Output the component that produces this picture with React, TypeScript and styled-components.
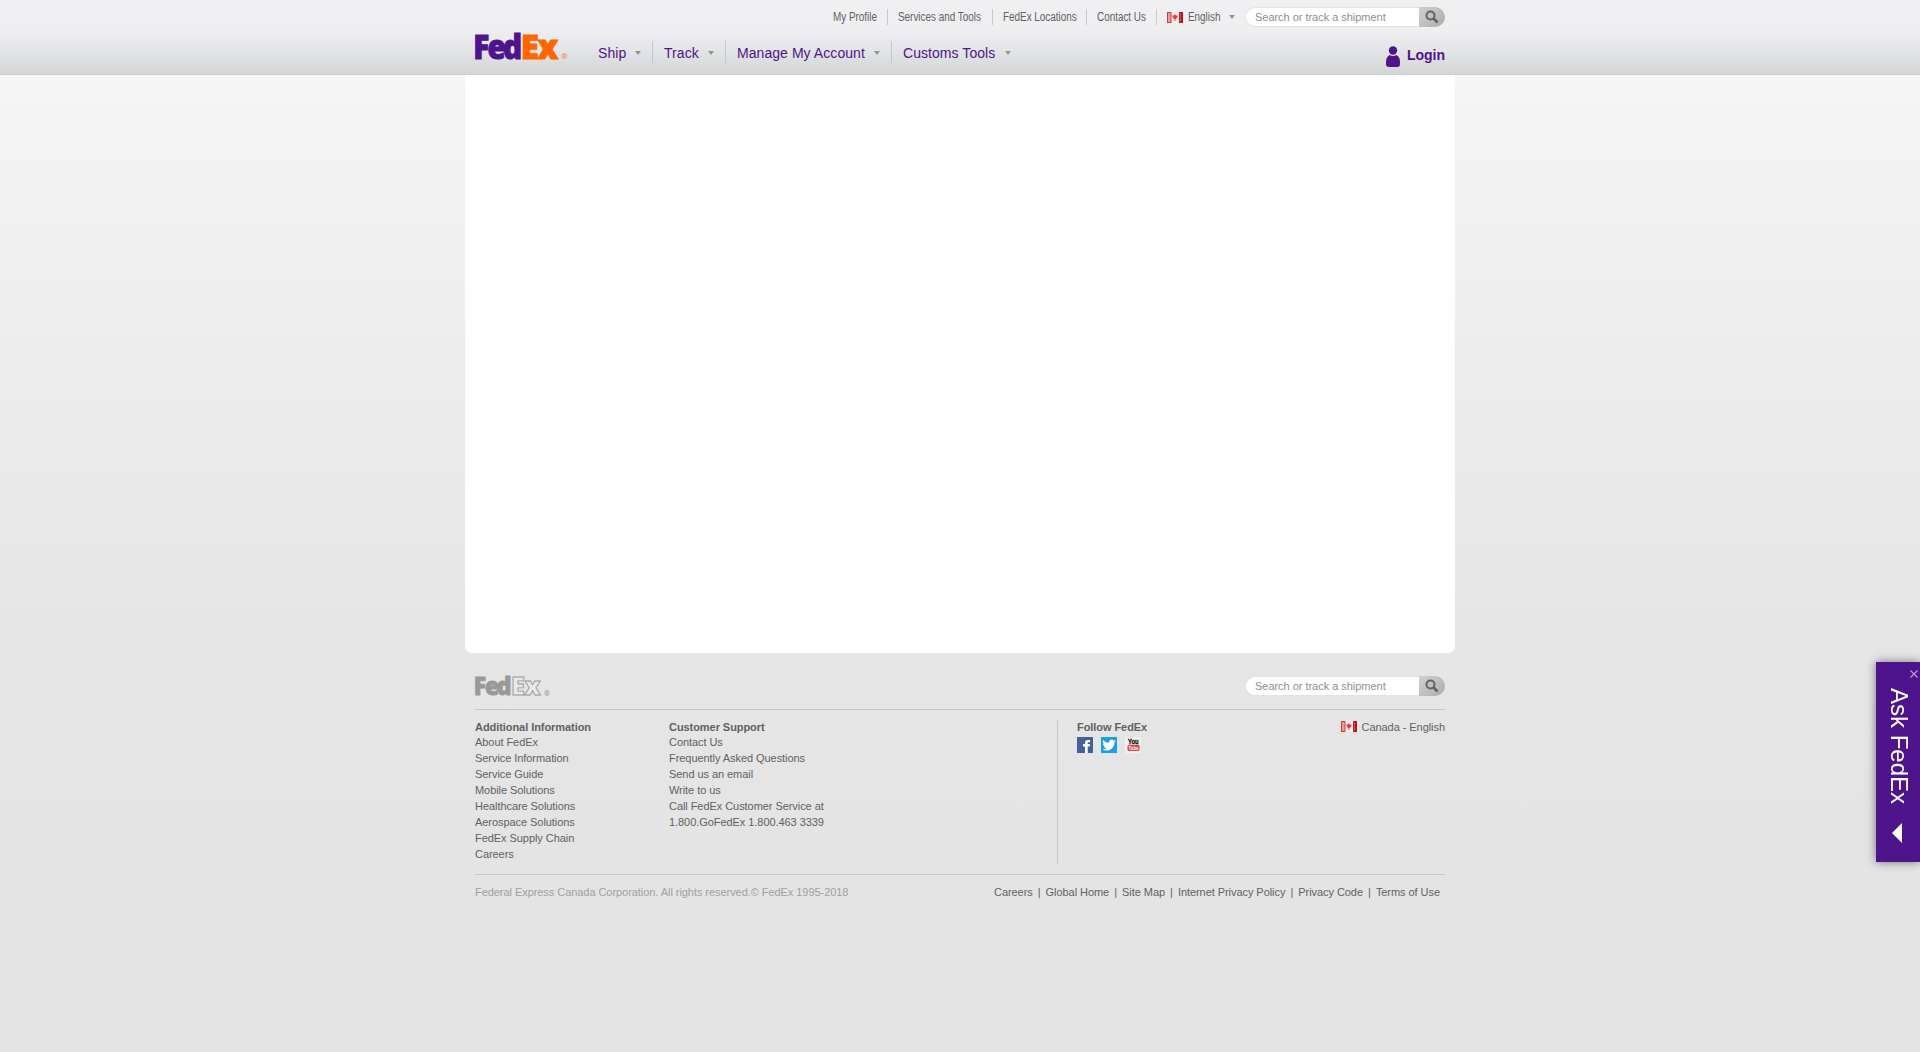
import React from 'react';
import styled, { createGlobalStyle } from 'styled-components';

const Global = createGlobalStyle`
  * { box-sizing: border-box; }
  html, body { margin: 0; padding: 0; }
  body {
    height: 1052px; overflow: hidden;
    background: linear-gradient(#f5f5f5 75px, #ececec 380px, #e6e6e6 620px, #e4e4e4 860px);
    font-family: "Liberation Sans", Arial, sans-serif; font-size: 11px; color: #616161;
  }
`;

const Header = styled.header`
  height: 75px;
  border-bottom: 1px solid #cfd0d1;
  background: linear-gradient(#f0f0f2 0, #efeff1 30px, #e5e6e7 48px, #d3d4d5 75px);
`;
const Container = styled.div`width: 970px; margin: 0 auto; display: flex; flex-direction: column;`;
const TopBar = styled.div`height: 34px; padding-top: 7px; display: flex; justify-content: flex-end;`;
const TopItem = styled.div<{ $w: number; $line?: string }>`
  width: ${p => p.$w}px; height: 16px; margin-top: 2px; padding-left: 10px;
  display: flex; align-items: center; gap: 5px; white-space: nowrap;
  border-left: 1px solid ${p => p.$line || '#c9c9cb'};
`;
const Narrow = styled.span<{ $w: number }>`
  width: ${p => p.$w}px; font-size: 12px; line-height: 16px;
  transform: scaleX(0.825); transform-origin: 0 50%; margin-right: ${p => -Math.round(p.$w * 0.175)}px;
`;
const Arrow = styled.i`
  width: 0; height: 0; border: 3.5px solid transparent; border-top: 4px solid #939393; border-bottom: 0;
`;
const MainBar = styled.div`height: 40px; display: flex;`;
const MainItem = styled.div<{ $w: number; $first?: boolean }>`
  width: ${p => p.$w}px; height: 22px; margin: 7px 0 0 ${p => (p.$first ? 17 : 0)}px; padding: 1px 11px 0;
  display: flex; align-items: center; justify-content: space-between;
  border-left: 1px solid ${p => (p.$first ? 'transparent' : '#c6c7c9')};
  color: #4d148c; font-size: 14px; white-space: nowrap;
`;
const NavText = styled.span`letter-spacing: 0.06px; padding-top: 1px;`;
const Login = styled.div`
  margin: 12px 0 0 auto; height: 21px; display: flex; align-items: flex-start; gap: 7px;
  color: #4d148c; font-size: 14px; font-weight: bold; line-height: 19px;
`;
const SearchBox = styled.div`width: 200px; height: 20px; display: flex; align-items: center;`;
const SearchField = styled.div`
  flex: 1; height: 20px; padding-left: 9px; line-height: 18px; border-radius: 10px 0 0 10px; white-space: nowrap;
  background: #fff; border: 1px solid #e3e3e4; border-right: 0; color: #8f8f8f; letter-spacing: -0.03px;
`;
const SearchButton = styled.div`
  width: 26px; height: 20px; border-radius: 0 10px 10px 0; display: flex; align-items: center; justify-content: center;
  background: linear-gradient(135deg, #cfcfcf, #bcbcbc 60%, #a9a9a9);
`;
const Content = styled.main`
  width: 990px; height: 578px; margin: 0 auto; background: #fff; border-radius: 0 0 7px 7px;
`;
const FooterTop = styled.div`
  height: 57px; padding-top: 23px; display: flex; justify-content: space-between; border-bottom: 1px solid #c6c6c6;
`;
const FooterMain = styled.div`height: 165px; padding-top: 10px; display: flex; border-bottom: 1px solid #c6c6c6;`;
const Column = styled.div<{ $w: number }>`width: ${p => p.$w}px; line-height: 16px; white-space: nowrap;`;
const Heading = styled.h3`
  margin: 0; height: 14px; font-size: 11px; line-height: 15px; letter-spacing: -0.06px;
`;
const Item = styled.div`height: 16px; letter-spacing: -0.06px;`;
const Follow = styled.div`width: 388px; height: 144px; padding-left: 19px; border-left: 1px solid #c6c6c6; display: flex; justify-content: space-between;`;
const Socials = styled.div`display: flex; gap: 8px; margin-top: 3px;`;
const Country = styled.div`display: flex; gap: 5px; height: 13px; align-items: center; white-space: nowrap; letter-spacing: -0.06px;`;
const FooterBottom = styled.div`padding-top: 9px; display: flex; line-height: 16px; white-space: nowrap;`;
const Copyright = styled.span`color: #a0a0a0; flex: 1; letter-spacing: -0.055px;`;
const Legal = styled.div`display: flex; justify-content: space-between; width: 446px; margin-right: 5px; letter-spacing: -0.06px;`;
const Ask = styled.aside`
  position: fixed; right: 0; top: 662px; width: 44px; height: 200px; background: #4d148c; color: #fff;
  box-shadow: 0 0 9px rgba(0,0,0,.5); display: flex; flex-direction: column; align-items: center;
`;
const Close = styled.svg`align-self: flex-end; margin: 8px 2px 0 0; flex: none;`;
const AskText = styled.div`writing-mode: vertical-rl; height: 118px; margin-top: 10px; margin-left: 2px; font-size: 24px; line-height: 28px; white-space: nowrap;`;
const AskArrow = styled.i`width: 0; height: 0; margin: 17px 0 0 -2px; border: 10px solid transparent; border-left: 0; border-right: 10px solid #fff;`;
const LogoMark = styled.svg`overflow: visible; flex: none; font-family: "Open Sans", "Liberation Sans", sans-serif; font-weight: 800;`;

const Flag = () => (
  <svg width="16" height="11" viewBox="0 0 16 11">
    <rect width="16" height="11" fill="#fbecec" />
    <rect width="4.5" height="11" fill="#cf3b42" /><rect x="1" y="1" width="2.5" height="9" fill="#ee9a9a" />
    <rect x="12" width="4" height="11" fill="#b5141d" /><rect x="12.7" y="1" width="1.2" height="9" fill="#e0484e" />
    <path d="M8 2l1 1.6 1.7-.2-.5 2.4-1.8 1.6V9h-.8V7.400L5.800 5.800l-.5-2.400 1.700.2z" fill="#d9434b" />
  </svg>
);

const Search = () => (
  <SearchBox>
    <SearchField>Search or track a shipment</SearchField>
    <SearchButton>
      <svg width="14" height="14" viewBox="0 0 14 14" fill="none" stroke="#636363">
        <circle cx="5.500" cy="5.500" r="4" strokeWidth="2" /><path d="M8.500 8.500L12.500 12.500" strokeWidth="2.600" />
      </svg>
    </SearchButton>
  </SearchBox>
);

const Logo = () => (
  <LogoMark width="94" height="30" viewBox="0 0 94 30" fontSize="33" strokeWidth="1">
    <text y="24.700" transform="scale(.9 1)" fill="#4d148c" stroke="#4d148c"><tspan x="-2 13.800 31">Fed</tspan></text>
    <text y="24.700" fill="#ff6600" stroke="#ff6600"><tspan x="45.800 62.500">Ex</tspan></text>
    <text x="86" y="25" fontSize="8" fontWeight="400" fill="#ff7a20">®</text>
  </LogoMark>
);
const FooterLogo = () => (
  <LogoMark width="76" height="22" viewBox="0 0 76 22" fontSize="25.500" strokeWidth="0.900">
    <text y="19.300" transform="scale(.9 1)" fill="#999" stroke="#999"><tspan x="-1.500 11 24.300">Fed</tspan></text>
    <text y="19.300" fill="#e9e9e9" stroke="#999"><tspan x="36 49.500">Ex</tspan></text>
    <text x="69" y="20" fontSize="7" fontWeight="700" fill="#999" strokeWidth="0">®</text>
  </LogoMark>
);

const additional = ['About FedEx', 'Service Information', 'Service Guide', 'Mobile Solutions', 'Healthcare Solutions', 'Aerospace Solutions', 'FedEx Supply Chain', 'Careers'];
const support = ['Contact Us', 'Frequently Asked Questions', 'Send us an email', 'Write to us', 'Call FedEx Customer Service at', '1.800.GoFedEx 1.800.463 3339'];
const legal = ['Careers', 'Global Home', 'Site Map', 'Internet Privacy Policy', 'Privacy Code', 'Terms of Use'];

export default function App() {
  return (
    <>
      <Global />
      <Header>
        <Container>
          <TopBar>
            <TopItem $w={65} $line="transparent"><Narrow $w={54}>My Profile</Narrow></TopItem>
            <TopItem $w={105}><Narrow $w={101}>Services and Tools</Narrow></TopItem>
            <TopItem $w={94}><Narrow $w={90}>FedEx Locations</Narrow></TopItem>
            <TopItem $w={70}><Narrow $w={60}>Contact Us</Narrow></TopItem>
            <TopItem $w={89} $line="#e2bfc2"><Flag /><Narrow $w={44}>English</Narrow><Arrow /></TopItem>
            <Search />
          </TopBar>
          <MainBar>
            <Logo />
            <MainItem $w={66} $first><NavText>Ship</NavText><Arrow /></MainItem>
            <MainItem $w={73}><NavText>Track</NavText><Arrow /></MainItem>
            <MainItem $w={166}><NavText>Manage My Account</NavText><Arrow /></MainItem>
            <MainItem $w={131}><NavText>Customs Tools</NavText><Arrow /></MainItem>
            <Login>
              <svg width="14" height="21" viewBox="0 0 14 21" fill="#4d148c">
                <circle cx="7" cy="4.500" r="4.200" /><path d="M3.500 9Q7 11 10.500 9Q14 11 14 16V18Q14 21 11 21H3Q0 21 0 18V16Q0 11 3.500 9Z" />
              </svg>
              Login
            </Login>
          </MainBar>
        </Container>
      </Header>
      <Content />
      <Container as="footer">
        <FooterTop><FooterLogo /><Search /></FooterTop>
        <FooterMain>
          <Column $w={194}><Heading>Additional Information</Heading>{additional.map(t => <Item key={t}>{t}</Item>)}</Column>
          <Column $w={388}><Heading>Customer Support</Heading>{support.map(t => <Item key={t}>{t}</Item>)}</Column>
          <Follow>
            <div>
              <Heading>Follow FedEx</Heading>
              <Socials>
                <svg width="16" height="16" viewBox="0 0 16 16"><rect width="16" height="16" fill="#45619d" /><path d="M8 16V9.500H6V7H8V5.500Q8 3 11 3H13V5.300H11.700Q10.700 5.300 10.700 6.200V7H13L12.700 9.500H10.700V16Z" fill="#fff" /></svg>
                <svg width="16" height="16" viewBox="0 0 24 24"><rect width="24" height="24" fill="#1da1e6" /><path transform="translate(2 2) scale(.84)" fill="#fff" d="M23.950 4.570a10 10 0 0 1-2.820.77 4.960 4.960 0 0 0 2.160-2.720c-.95.55-2 .95-3.120 1.180a4.920 4.920 0 0 0-8.380 4.480C7.690 8.090 4.070 6.130 1.640 3.160a4.920 4.920 0 0 0 1.520 6.570 4.900 4.900 0 0 1-2.230-.61v.06a4.920 4.920 0 0 0 3.950 4.830 5 5 0 0 1-2.210.08 4.940 4.940 0 0 0 4.600 3.420A9.870 9.870 0 0 1 0 19.540a14 14 0 0 0 7.550 2.210c9.050 0 14-7.500 14-13.980l-.02-.63a9.940 9.940 0 0 0 2.420-2.570z" /></svg>
                <svg width="16" height="16" viewBox="0 0 16 16" fontFamily={'"Liberation Sans", sans-serif'} fontWeight="bold"><rect width="16" height="16" fill="#f1efef" /><text x="3" y="7" fontSize="7" textLength="10.500" lengthAdjust="spacingAndGlyphs" fill="#111" stroke="#111" strokeWidth="0.300">You</text><rect x="2.500" y="7.800" width="12" height="6.200" rx="1.500" fill="#d84343" /><text x="3.500" y="13" fontSize="6" textLength="10" lengthAdjust="spacingAndGlyphs" fill="#fff">Tube</text></svg>
              </Socials>
            </div>
            <Country><Flag />Canada - English</Country>
          </Follow>
        </FooterMain>
        <FooterBottom>
          <Copyright>Federal Express Canada Corporation. All rights reserved.© FedEx 1995-2018</Copyright>
          <Legal>{legal.map((t, i) => <React.Fragment key={t}>{i > 0 && <span>|</span>}<span>{t}</span></React.Fragment>)}</Legal>
        </FooterBottom>
      </Container>
      <Ask>
        <Close width="8" height="8" viewBox="0 0 8 8" stroke="#b49bd2" strokeWidth="1.200"><path d="M.5.5l7 7M7.500.5l-7 7" /></Close>
        <AskText>Ask FedEx</AskText>
        <AskArrow />
      </Ask>
    </>
  );
}
